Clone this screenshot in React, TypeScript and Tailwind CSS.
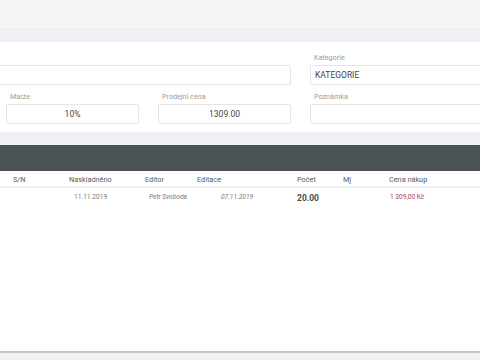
export default function App() {
  const label = "text-[7.2px] text-[#9a9a9a] leading-none mb-[4px] pl-[4px]"
  const input = "h-[20px] border border-[#e4e4e6] rounded-[2px] bg-white text-[8.5px] text-[#444] flex items-center"

  return (
    <div className="w-[480px] h-[360px] overflow-hidden bg-white flex flex-col" style={{ fontFamily: "Roboto, 'Liberation Sans', sans-serif" }}>
      <div className="h-[28px] bg-[#f4f5f5] border-b border-[#f9f9fa]" />
      <div className="h-[14px] bg-[#eef0f4]" />

      {/* form card */}
      <div className="h-[90px] bg-white flex flex-col pt-[12px]">
        <div className="flex items-end">
          <div className="w-[291px] shrink-0">
            <div className={input + " border-l-0 rounded-l-none"} />
          </div>
          <div className="ml-[19px] w-[200px] shrink-0">
            <div className={label}>Kategorie</div>
            <div className={input + " pl-[4px]"}>KATEGORIE</div>
          </div>
        </div>
        <div className="flex items-end mt-[8px] pl-[6px]">
          <div className="w-[133px] shrink-0">
            <div className={label}>Marže</div>
            <div className={input + " justify-center"}>10%</div>
          </div>
          <div className="ml-[19px] w-[133px] shrink-0">
            <div className={label}>Prodejní cena</div>
            <div className={input + " justify-center"}>1309.00</div>
          </div>
          <div className="ml-[19px] w-[200px] shrink-0">
            <div className={label}>Poznámka</div>
            <div className={input} />
          </div>
        </div>
      </div>

      <div className="h-[13px] bg-[#eef0f4]" />
      <div className="h-[26px] bg-[#4b5253]" />

      {/* table */}
      <div className="flex-1 bg-white flex flex-col">
        <div className="h-[17px] pt-[4px] grid grid-cols-[69px_76px_52px_100px_46px_46px_1fr] items-center text-[7.3px] text-[#5a5a5a] border-b-2 border-[#eeeeef]">
          <div className="pl-[13px]">S/N</div>
          <div>Naskladněno</div>
          <div>Editor</div>
          <div>Editace</div>
          <div>Počet</div>
          <div>Mj</div>
          <div>Cena nákup</div>
        </div>
        <div className="h-[17px] pt-[3px] grid grid-cols-[69px_76px_52px_100px_46px_46px_1fr] items-center text-[6.6px] text-[#777]">
          <div />
          <div className="pl-[5px]">11.11.2019</div>
          <div className="pl-[4px] italic">Petr Svoboda</div>
          <div className="pl-[24px] italic">07.11.2019</div>
          <div className="text-[8.5px] font-bold text-[#4a4a4a]">20.00</div>
          <div />
          <div className="pl-[1px] text-[#b04050]">1 309,00 Kč</div>
        </div>
        <div className="flex-1" />
      </div>

      <div className="h-[2px] bg-[#c6c6ca]" />
      <div className="h-[7px] bg-[#f0f0f5]" />
    </div>
  )
}
